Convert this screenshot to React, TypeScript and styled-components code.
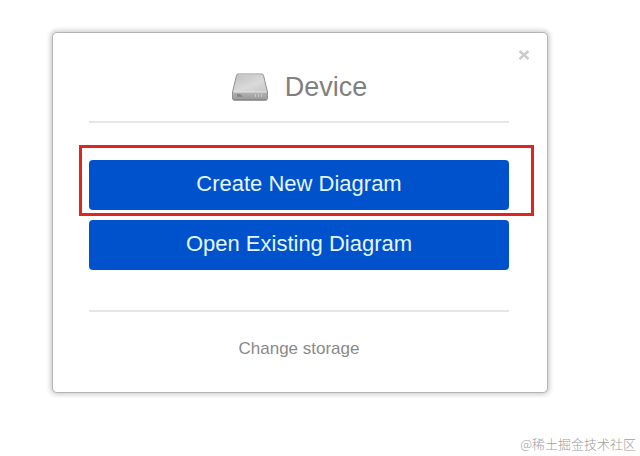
import React from "react";
import styled, { createGlobalStyle } from "styled-components";

const GlobalStyle = createGlobalStyle`
  * { box-sizing: border-box; }
  body {
    margin: 0;
    background: #ffffff;
    font-family: "Liberation Sans", Arial, sans-serif;
  }
`;

const Page = styled.main`
  display: flex;
  flex-direction: column;
  min-height: 100vh;
`;

const Dialog = styled.section`
  display: flex;
  flex-direction: column;
  position: relative;
  margin: 32px 92px 0 52px;
  padding: 28px 38px 33px 36px;
  border: 1px solid #b4b4b4;
  border-radius: 5px;
  background: #ffffff;
  box-shadow: 0 0 4px 2px #d2d2d2;
`;

const CloseButton = styled.button`
  position: absolute;
  top: 13px;
  right: 14px;
  width: 18px;
  height: 18px;
  padding: 0;
  border: 0;
  background: none;
  color: #cccccc;
  cursor: pointer;

  svg { display: block; }
`;

const Header = styled.header`
  display: flex;
  align-items: center;
  justify-content: center;
  gap: 16px;
  height: 62px;
  padding-bottom: 8px;
  border-bottom: 2px solid #e6e6e6;
`;

const Title = styled.h1`
  margin: 0;
  color: #808080;
  font-size: 27px;
  font-weight: 400;
  line-height: 32px;
`;

const Actions = styled.div`
  position: relative;
  display: flex;
  flex-direction: column;
  gap: 10px;
  padding: 37px 0 40px;
`;

const ActionButton = styled.button`
  height: 50px;
  padding: 0 0 2px;
  border: 0;
  border-radius: 4px;
  background: #0052cc;
  color: #e4f7ff;
  font-family: inherit;
  font-size: 22px;
  line-height: 28px;
  cursor: pointer;
`;

const Highlight = styled.div`
  position: absolute;
  top: 22px;
  left: -10px;
  right: -25px;
  height: 71px;
  border: 3px solid #e02420;
  pointer-events: none;
`;

const Footer = styled.footer`
  display: flex;
  justify-content: center;
  padding-top: 27px;
  border-top: 2px solid #e6e6e6;
`;

const StorageLink = styled.a`
  color: #8a8a8a;
  font-size: 17px;
  line-height: 20px;
  text-decoration: none;
`;

const Watermark = styled.p`
  margin: auto 4px 2px auto;
  color: #a0a0a0;
  font-family: "Noto Sans CJK SC", sans-serif;
  font-size: 13px;
  font-weight: 300;
  line-height: 20px;
`;

function DriveIcon() {
  return (
    <svg width="38" height="30" viewBox="0 0 38 30" aria-hidden="true">
      <defs>
        <linearGradient id="drive-top" x1="0" y1="0" x2="0.6" y2="1">
          <stop offset="0" stopColor="#bdbdbd" />
          <stop offset="0.55" stopColor="#dadada" />
          <stop offset="1" stopColor="#c4c4c4" />
        </linearGradient>
        <linearGradient id="drive-front" x1="0" y1="0" x2="0" y2="1">
          <stop offset="0" stopColor="#b4b4b4" />
          <stop offset="1" stopColor="#999999" />
        </linearGradient>
      </defs>
      <path d="M6.5 2h25l1 1.4L36.5 20v7l-1 1h-33L1.5 27v-7L5.5 3.4z" fill="url(#drive-top)" stroke="#929292" />
      <path d="M2 20h34v7l-1 1H3l-1-1z" fill="url(#drive-front)" />
      <path d="M2.5 20h33" stroke="#e6e6e6" />
      <path d="M7.5 3h23" stroke="#d4d4d4" />
      <path d="M6 22l3 .2 3.5 2.6H6z" fill="#858585" />
      <path d="M24.5 22v3M27.5 22v3M30.5 22v3" stroke="#c8c8c8" />
      <path d="M2.5 28h33" stroke="#777777" />
    </svg>
  );
}

export default function App() {
  return (
    <>
      <GlobalStyle />
      <Page>
        <Dialog role="dialog" aria-labelledby="dialog-title">
          <CloseButton type="button" aria-label="Close">
            <svg width="18" height="18" viewBox="0 0 18 18" aria-hidden="true">
              <path d="M4.5 5l9 8M13.5 5l-9 8" stroke="currentColor" strokeWidth="2.4" />
            </svg>
          </CloseButton>
          <Header>
            <DriveIcon />
            <Title id="dialog-title">Device</Title>
          </Header>
          <Actions>
            <ActionButton type="button">Create New Diagram</ActionButton>
            <ActionButton type="button">Open Existing Diagram</ActionButton>
            <Highlight />
          </Actions>
          <Footer>
            <StorageLink href="#storage">Change storage</StorageLink>
          </Footer>
        </Dialog>
        <Watermark>@稀土掘金技术社区</Watermark>
      </Page>
    </>
  );
}
